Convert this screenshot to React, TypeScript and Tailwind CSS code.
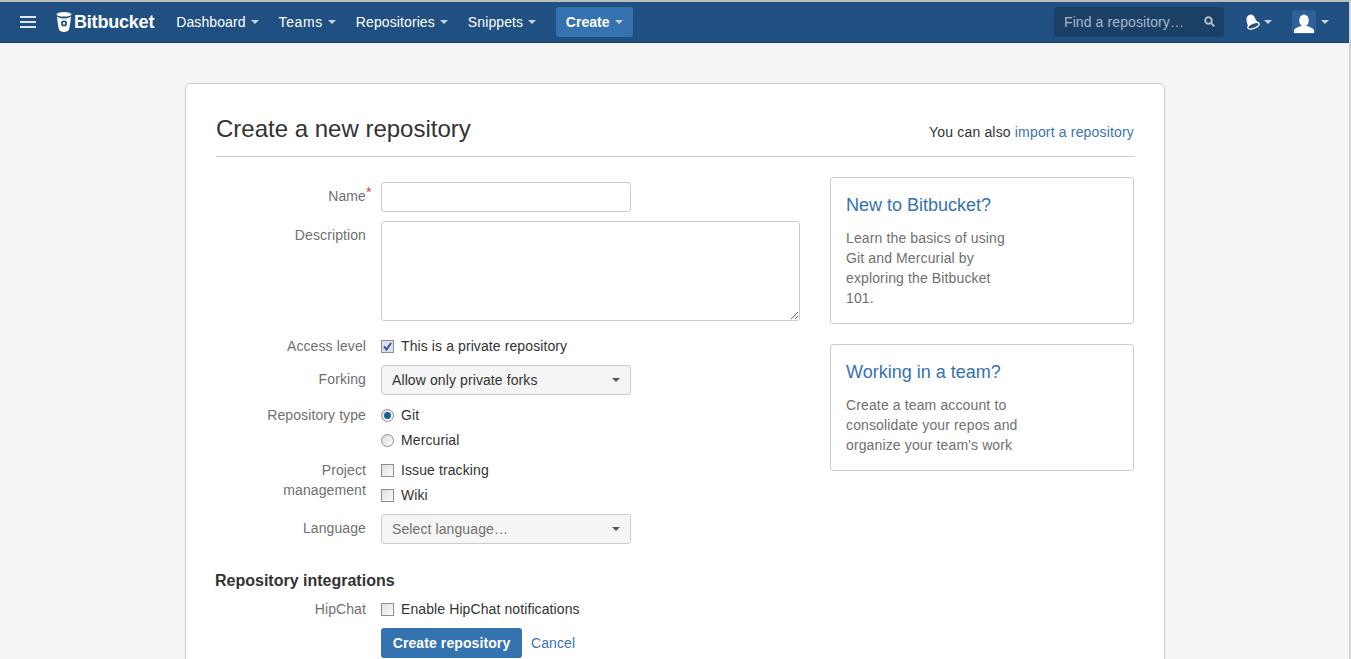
import { ReactNode } from "react";

function Caret({ className = "border-t-[#c9d3df]" }: { className?: string }) {
  return (
    <span
      className={`inline-block w-0 h-0 border-x-4 border-x-transparent border-t-4 ${className}`}
    />
  );
}

function NavItem({ label, className = "" }: { label: string; className?: string }) {
  return (
    <a className={`flex items-center gap-[5px] text-white text-sm ${className}`}>
      {label}
      <Caret />
    </a>
  );
}

function Logo() {
  return (
    <div className="flex items-center gap-[2px] text-white">
      <svg width="16" height="20" viewBox="0 0 16 20">
        <path d="M1 4.500C1.500 9 2 14 3 17.500 3.400 19 5.500 20 8 20s4.600-1 5-2.500C14 14 14.500 9 15 4.500 13 6 10.500 6.500 8 6.500S3 6 1 4.500z" fill="#fff" />
        <ellipse cx="8" cy="2.300" rx="7.500" ry="2.300" fill="#fff" />
        <circle cx="8" cy="11.500" r="3" fill="#205081" />
        <circle cx="8" cy="11.500" r="1.200" fill="#fff" />
      </svg>
      <span className="text-[18px] font-bold leading-none tracking-[-0.2px]">Bitbucket</span>
    </div>
  );
}

function Bell() {
  return (
    <svg width="16" height="17" viewBox="0 0 16 17">
      <path d="M4 2C6 .5 9 2 10 5c1 3 2.500 4 4.500 5L3 15c.5-3-2-5.500-1.500-9C1.600 4 2.500 3 4 2z" fill="#fff" />
      <ellipse cx="8.500" cy="12.800" rx="6" ry="2.500" transform="rotate(-22 8.500 12.800)" fill="#205081" stroke="#fff" strokeWidth="1.300" />
    </svg>
  );
}

function Avatar() {
  return (
    <div className="w-6 h-6 rounded-[3px] bg-[#2c619a] flex items-end justify-center overflow-hidden">
      <svg width="20" height="20" viewBox="0 0 20 20" fill="#fff">
        <ellipse cx="10" cy="6.500" rx="4.800" ry="6" />
        <path d="M0 19v-2.500c0-2 4-3 6.500-4.500h7c2.500 1.500 6.500 2.500 6.500 4.500V19z" />
      </svg>
    </div>
  );
}

function SearchIcon() {
  return (
    <svg width="11" height="11" viewBox="0 0 11 11" fill="none" stroke="#aebbc9" strokeWidth="2">
      <circle cx="4.500" cy="4.500" r="3.300" />
      <path d="M7 7l3.300 3.300" />
    </svg>
  );
}

function Navbar() {
  return (
    <header className="h-[43px] pt-[2px]">
      <div className="h-[41px] pb-px bg-[#205081] border-b border-[#1b3f66] flex items-center pl-5 pr-[20px]">
        <button className="flex flex-col gap-[3px] w-4 mr-5">
          <span className="h-[2px] bg-[#dfe6ee]" />
          <span className="h-[2px] bg-[#dfe6ee]" />
          <span className="h-[2px] bg-[#dfe6ee]" />
        </button>
        <Logo />
        <nav className="flex items-center ml-[22px] gap-5">
          <NavItem label="Dashboard" />
          <NavItem label="Teams" className="tracking-[0.6px]" />
          <NavItem label="Repositories" />
          <NavItem label="Snippets" />
        </nav>
        <button className="ml-5 h-[30px] w-[77px] rounded-[3px] bg-[#3572b0] text-white text-sm font-bold tracking-normal flex items-center justify-center gap-[6px]">
          Create
          <Caret />
        </button>
        <div className="ml-auto flex items-center">
          <div className="w-[170px] h-[30px] rounded-[3px] bg-[#1a4066] flex items-center justify-between pl-[10px] pr-[9px] text-sm text-[#a9b6c4]">
            <span>Find a repository…</span>
            <SearchIcon />
          </div>
          <div className="flex items-center gap-[3px] ml-[21px]">
            <Bell />
            <Caret />
          </div>
          <div className="flex items-center gap-[5px] ml-[20px]">
            <Avatar />
            <Caret />
          </div>
        </div>
      </div>
    </header>
  );
}

function Label({ children }: { children: ReactNode }) {
  return <div className="w-[150px] text-right text-[#707070] leading-5">{children}</div>;
}

function Row({ label, className = "", children }: { label: ReactNode; className?: string; children: ReactNode }) {
  return (
    <div className={`flex gap-[15px] ${className}`}>
      <Label>{label}</Label>
      <div className="flex-1">{children}</div>
    </div>
  );
}

function Check({ checked = false }: { checked?: boolean }) {
  return (
    <span
      className={`w-[13px] h-[13px] border border-[#8e8e8e] flex items-center justify-center shrink-0 ${
        checked ? "bg-[#dbe0ee]" : "bg-linear-to-br from-[#dcdcdc] to-white"
      }`}
    >
      {checked && (
        <svg width="9" height="9" viewBox="0 0 9 9" fill="none" stroke="#3a55a0" strokeWidth="2">
          <path d="M1 4.500l2.500 3L8 1" />
        </svg>
      )}
    </span>
  );
}

function Radio({ checked = false }: { checked?: boolean }) {
  return (
    <span className="w-[13px] h-[13px] rounded-full border border-[#8e8e8e] bg-linear-to-br from-[#d8d8d8] to-white flex items-center justify-center shrink-0">
      {checked && <span className="w-[7px] h-[7px] rounded-full bg-[#17608f]" />}
    </span>
  );
}

function Option({ control, children }: { control: ReactNode; children: ReactNode }) {
  return (
    <label className="flex items-center gap-[7px] h-5 text-[#333]">
      {control}
      {children}
    </label>
  );
}

function Select({ value, muted = false }: { value: string; muted?: boolean }) {
  return (
    <div
      className={`w-[250px] h-[30px] rounded-[3px] border border-[#ccc] bg-[#f5f5f5] flex items-center justify-between pl-[10px] pr-[10px] ${
        muted ? "text-[#707070]" : "text-[#333]"
      }`}
    >
      {value}
      <Caret className="border-t-[#555]" />
    </div>
  );
}

function InfoBox({ title, lines }: { title: string; lines: string[] }) {
  return (
    <div className="border border-[#ccc] rounded-[3px] px-[15px] pt-[15px] pb-[15px]">
      <h3 className="text-lg leading-[25px] text-[#3572b0] tracking-normal">{title}</h3>
      <div className="mt-[10px] text-[#707070] leading-5 tracking-[0.13px]">
        {lines.map((line) => (
          <p key={line}>{line}</p>
        ))}
      </div>
    </div>
  );
}

export default function App() {
  return (
    <div className="h-[659px] overflow-hidden bg-[#f5f5f5] border-t-2 border-r-2 border-t-[#bdbdbd] border-r-[#d4d4d4] text-sm tracking-[0.1px] font-['Liberation_Sans',Arial,sans-serif]">
      <div className="-mt-[2px]">
        <Navbar />
      </div>
      <main className="w-[980px] ml-[185px] mt-10 h-[700px] bg-white border border-[#ccc] rounded-[5px] px-[30px] pt-[30px]">
        <div className="flex items-end justify-between border-b border-[#ccc] h-[43px] pb-[12px]">
          <h1 className="text-2xl leading-[30px] text-[#333] tracking-normal">Create a new repository</h1>
          <p className="text-[#333] leading-5 mb-[2px] tracking-[0.17px]">
            You can also <a className="text-[#3b73af]">import a repository</a>
          </p>
        </div>
        <div className="flex gap-[30px] mt-[25px]">
          <form className="w-[584px]">
            <Row
              label={
                <span className="relative">
                  Name
                  <span className="absolute left-full -top-[3px] text-[#d04437] leading-none">*</span>
                </span>
              }
              className="[&>div:first-child]:pt-[4px]"
            >
              <div className="w-[250px] h-[30px] border border-[#ccc] rounded-[3px]" />
            </Row>
            <Row label="Description" className="mt-[9px] [&>div:first-child]:pt-[4px]">
              <textarea className="block w-[419px] h-[100px] border border-[#ccc] rounded-[3px]" />
            </Row>
            <Row label="Access level" className="mt-[15px]">
              <Option control={<Check checked />}>This is a private repository</Option>
            </Row>
            <Row label="Forking" className="mt-[9px] [&>div:first-child]:pt-[4px]">
              <Select value="Allow only private forks" />
            </Row>
            <Row label="Repository type" className="mt-[10px]">
              <Option control={<Radio checked />}>Git</Option>
              <div className="mt-[5px]">
                <Option control={<Radio />}>Mercurial</Option>
              </div>
            </Row>
            <Row label={<>Project<br />management</>} className="mt-[10px]">
              <Option control={<Check />}>Issue tracking</Option>
              <div className="mt-[5px]">
                <Option control={<Check />}>Wiki</Option>
              </div>
            </Row>
            <Row label="Language" className="mt-[9px] [&>div:first-child]:pt-[4px]">
              <Select value="Select language…" muted />
            </Row>
            <h2 className="mt-[27px] -ml-px text-base leading-5 font-bold text-[#333] tracking-normal">Repository integrations</h2>
            <Row label="HipChat" className="mt-[8px]">
              <Option control={<Check />}>Enable HipChat notifications</Option>
            </Row>
            <div className="flex items-center ml-[165px] mt-[9px]">
              <button className="h-[30px] w-[141px] rounded-[3px] bg-[#3572b0] text-white font-bold">Create repository</button>
              <a className="ml-[9px] text-[#3b73af]">Cancel</a>
            </div>
          </form>
          <aside className="w-[304px] flex flex-col gap-5 -mt-[5px]">
            <InfoBox
              title="New to Bitbucket?"
              lines={["Learn the basics of using", "Git and Mercurial by", "exploring the Bitbucket", "101."]}
            />
            <InfoBox
              title="Working in a team?"
              lines={["Create a team account to", "consolidate your repos and", "organize your team's work"]}
            />
          </aside>
        </div>
      </main>
    </div>
  );
}
